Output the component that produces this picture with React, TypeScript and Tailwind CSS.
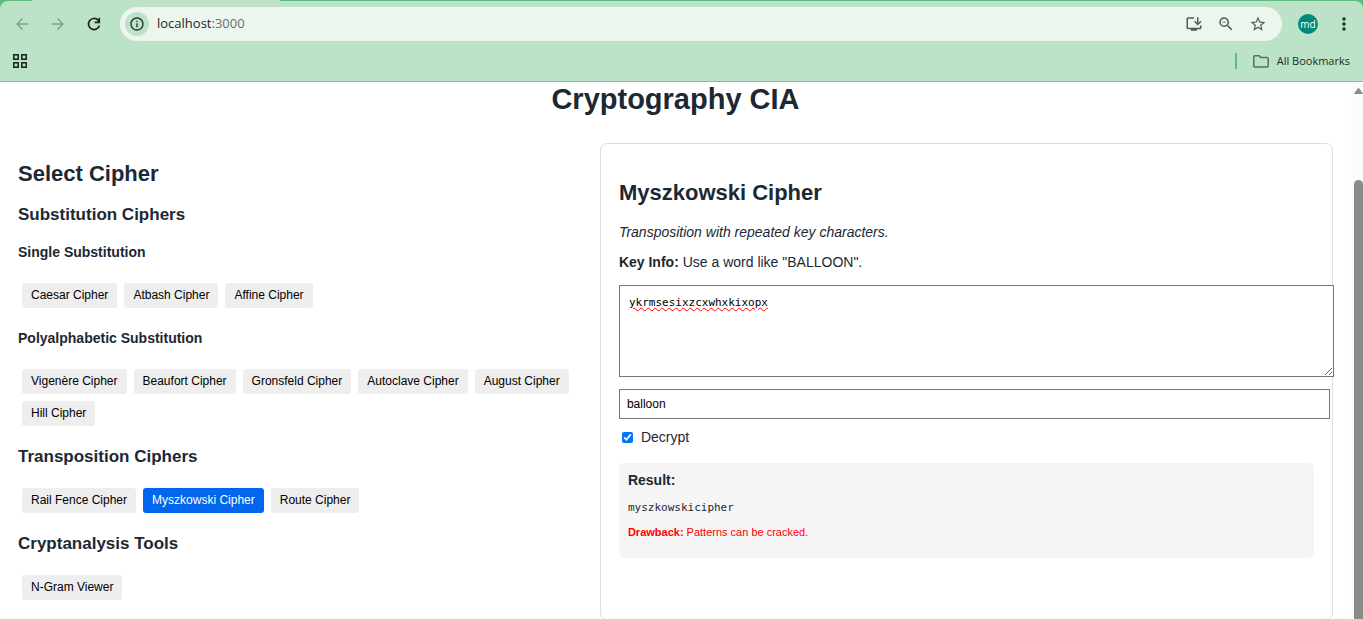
import { useState } from "react";
import {
  MdArrowBack,
  MdArrowForward,
  MdInfoOutline,
  MdMoreVert,
  MdOutlineInstallDesktop,
  MdStarBorder,
  MdZoomOut,
} from "react-icons/md";

function ReloadIcon() {
  return (
    <svg width="18" height="18" viewBox="0 0 24 24" fill="none" stroke="currentColor" strokeWidth="2.3">
      <path d="M19.2 14 A7.4 7.4 0 1 1 17.4 6.9 L19 8.6" />
      <path d="M19 3.8 V9.9 H12.9" />
    </svg>
  );
}

function FolderIcon() {
  return (
    <svg width="16" height="13" viewBox="0 0 16 13" fill="none" stroke="#5d6b62" strokeWidth="1.5" strokeLinejoin="round">
      <path d="M0.8 1.8 Q0.8 0.8 1.8 0.8 H6 L7.7 2.6 H14.2 Q15.2 2.6 15.2 3.6 V11 Q15.2 12 14.2 12 H1.8 Q0.8 12 0.8 11 Z" />
    </svg>
  );
}

function BrowserBar() {
  return (
    <header className="shrink-0 bg-[#5fba7d] font-['Open_Sans','Noto_Sans',sans-serif]">
      <div className="ml-8 h-px w-[248px] bg-[#bce3c8]" />
      <div className="rounded-t-lg border-b border-[#95b59f] bg-[#bce3c8]">
        <div className="flex h-[46px] items-center pr-[9px] pl-[13px]">
          <nav className="flex items-center gap-[18px]">
            <button type="button" aria-label="Back" className="text-[#83a08c]">
              <MdArrowBack size={18} />
            </button>
            <button type="button" aria-label="Forward" className="text-[#83a08c]">
              <MdArrowForward size={18} />
            </button>
            <button type="button" aria-label="Reload" className="text-[#1c2420]">
              <ReloadIcon />
            </button>
          </nav>
          <div className="ml-[17px] flex h-[34px] flex-1 items-center rounded-full bg-[#ecf6ef] pr-[15px] pl-[5px]">
            <span className="flex size-6 items-center justify-center rounded-full bg-[#bce3c8] text-[#26332b]">
              <MdInfoOutline size={16} />
            </span>
            <span className="ml-2 flex-1 text-[13px] text-[#1f1f1f]">
              localhost<span className="text-[#66706a]">:3000</span>
            </span>
            <div className="flex items-center gap-3.5 text-[#545b57]">
              <button type="button" aria-label="Install">
                <MdOutlineInstallDesktop size={18} />
              </button>
              <button type="button" aria-label="Zoom">
                <MdZoomOut size={18} />
              </button>
              <button type="button" aria-label="Bookmark">
                <MdStarBorder size={18} />
              </button>
            </div>
          </div>
          <span className="ml-4 flex size-5 items-center justify-center rounded-full bg-[#00897b] text-[10px] text-white">
            md
          </span>
          <button type="button" aria-label="Menu" className="ml-4 text-[#1f2a24]">
            <MdMoreVert size={20} />
          </button>
        </div>
        <div className="flex h-[34px] items-start justify-between px-[13px]">
          <button type="button" aria-label="Apps" className="mt-[7px]">
            <svg width="14" height="14" viewBox="0 0 14 14" fill="none" stroke="#1f2a24" strokeWidth="1.6">
              <rect x="0.8" y="0.8" width="4.4" height="4.4" />
              <rect x="8.8" y="0.8" width="4.4" height="4.4" />
              <rect x="0.8" y="8.8" width="4.4" height="4.4" />
              <rect x="8.8" y="8.8" width="4.4" height="4.4" />
            </svg>
          </button>
          <div className="mt-[6px] flex h-4 items-center">
            <span className="h-4 w-0.5 bg-[#5fba7d]" />
            <button type="button" className="ml-4 flex items-center gap-2 text-[11px] text-[#1f2a24]">
              <FolderIcon />
              All Bookmarks
            </button>
          </div>
        </div>
      </div>
    </header>
  );
}

type GroupProps = {
  names: string[];
  selected: string;
  onSelect: (name: string) => void;
};

function CipherGroup({ names, selected, onSelect }: GroupProps) {
  return (
    <div className="mt-[21px] flex flex-wrap gap-[7px] pl-1">
      {names.map((name) => (
        <button
          key={name}
          type="button"
          onClick={() => onSelect(name)}
          className={
            "h-[25px] rounded-[3px] px-[9px] pb-0.5 text-xs " +
            (name === selected ? "bg-[#0066ee] text-white" : "bg-[#eeeeee] text-black")
          }
        >
          {name}
        </button>
      ))}
    </div>
  );
}

export default function App() {
  const [selected, setSelected] = useState("Myszkowski Cipher");
  const group = { selected, onSelect: setSelected };
  return (
    <div className="flex h-screen flex-col overflow-hidden bg-white">
      <BrowserBar />
      <div className="flex min-h-0 flex-1">
        <main className="min-w-0 flex-1 overflow-hidden px-[18px] font-['Liberation_Sans',Arial,sans-serif] text-sm leading-[18px] text-[#1c2833]">
          <h1 className="text-center text-[29px] leading-[34px] font-bold">Cryptography CIA</h1>
          <div className="mt-[27px] grid grid-cols-[10fr_13fr] gap-[18px]">
            <section className="pt-[18px] pb-5">
              <h2 className="text-[22px] leading-[26px] font-bold">Select Cipher</h2>
              <h3 className="mt-[18px] text-[17px] leading-5 font-bold">Substitution Ciphers</h3>
              <h4 className="mt-[17px] text-sm leading-5 font-bold">Single Substitution</h4>
              <CipherGroup {...group} names={["Caesar Cipher", "Atbash Cipher", "Affine Cipher"]} />
              <h4 className="mt-5 text-sm leading-5 font-bold">Polyalphabetic Substitution</h4>
              <CipherGroup
                {...group}
                names={[
                  "Vigenère Cipher",
                  "Beaufort Cipher",
                  "Gronsfeld Cipher",
                  "Autoclave Cipher",
                  "August Cipher",
                  "Hill Cipher",
                ]}
              />
              <h3 className="mt-[21px] text-[17px] leading-5 font-bold">Transposition Ciphers</h3>
              <CipherGroup {...group} names={["Rail Fence Cipher", "Myszkowski Cipher", "Route Cipher"]} />
              <h3 className="mt-[21px] text-[17px] leading-5 font-bold">Cryptanalysis Tools</h3>
              <CipherGroup {...group} names={["N-Gram Viewer"]} />
            </section>

            <section className="min-w-0 rounded-[7px] border border-[#dddddd] px-[18px] pt-9">
              <h2 className="text-[22px] leading-[26px] font-bold">Myszkowski Cipher</h2>
              <p className="mt-[17px] italic">Transposition with repeated key characters.</p>
              <p className="mt-3">
                <strong>Key Info:</strong> Use a word like "BALLOON".
              </p>
              <textarea
                aria-label="Text"
                defaultValue="ykrmsesixzcxwhxkixopx"
                className="mt-3.5 box-content block h-[72px] w-full resize border border-[#767676] bg-white px-[9px] py-[9px] font-['DejaVu_Sans_Mono',monospace] text-[11px] leading-4 text-black underline decoration-[#ff0000] decoration-wavy decoration-1"
              />
              <input
                type="text"
                aria-label="Key"
                defaultValue="balloon"
                className="mt-3 box-content block h-7 w-full border border-[#767676] bg-white px-[7px] text-xs text-black"
              />
              <label className="mt-[9px] flex items-center gap-2 pl-[3px]">
                <input type="checkbox" defaultChecked className="size-[11px] accent-[#0075ff]" />
                Decrypt
              </label>
              <div className="mt-[17px] rounded-[5px] bg-[#f5f5f5] px-[9px] pt-2 pb-[19px]">
                <h3 className="font-bold">Result:</h3>
                <pre className="mt-[11px] font-['DejaVu_Sans_Mono',monospace] text-[11px] leading-4">
                  myszkowskicipher
                </pre>
                <p className="mt-[9px] text-[11px] leading-[14px] text-[#ff0000]">
                  <strong>Drawback:</strong> Patterns can be cracked.
                </p>
              </div>
            </section>
          </div>
        </main>
        <div aria-hidden="true" className="flex w-3 shrink-0 flex-col items-end bg-[#fcfcfc] pt-[5px]">
          <svg width="9" height="7" viewBox="0 0 9 7" fill="#8b8b8b">
            <path d="M4.5 0.5 L8.6 6 Q8.8 7 8 7 H1 Q0.2 7 0.4 6 Z" />
          </svg>
          <span className="mt-[86px] w-[9px] flex-1 rounded-t-full bg-[#8b8b8b]" />
        </div>
      </div>
    </div>
  );
}
